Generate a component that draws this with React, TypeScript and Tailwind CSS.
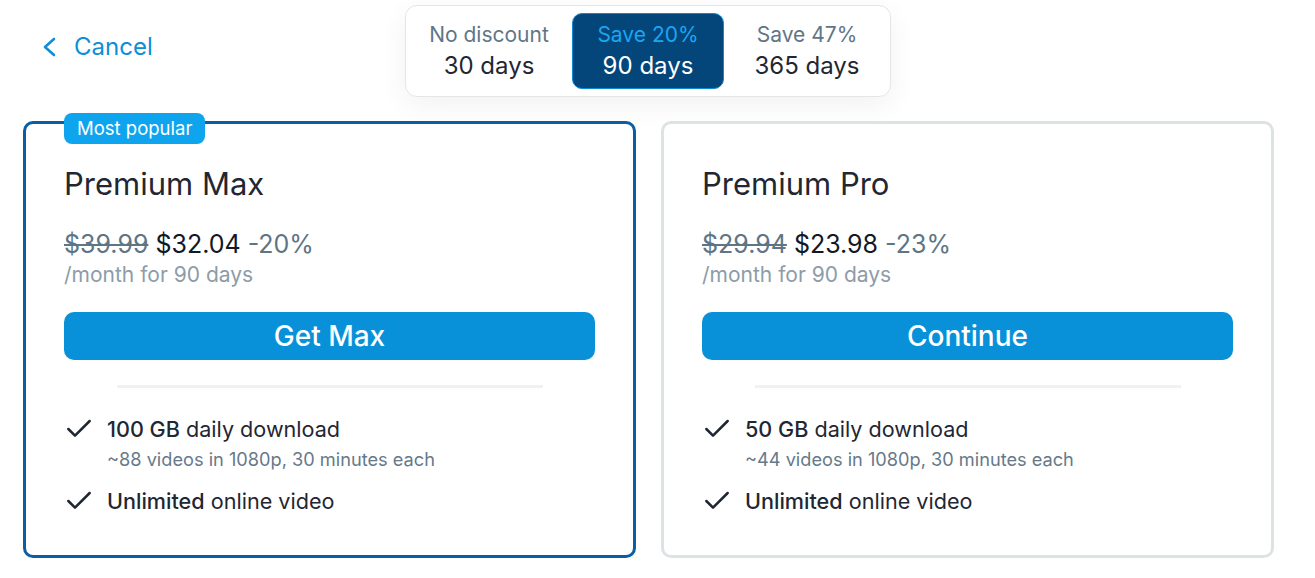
import { Check } from 'lucide-react'

type Plan = {
  name: string
  oldPrice: string
  price: string
  discount: string
  cta: string
  gb: string
  videos: string
  popular?: boolean
}

const plans: Plan[] = [
  {
    name: 'Premium Max',
    oldPrice: '$39.99',
    price: '$32.04',
    discount: '-20%',
    cta: 'Get Max',
    gb: '100 GB',
    videos: '~88 videos in 1080p, 30 minutes each',
    popular: true,
  },
  {
    name: 'Premium Pro',
    oldPrice: '$29.94',
    price: '$23.98',
    discount: '-23%',
    cta: 'Continue',
    gb: '50 GB',
    videos: '~44 videos in 1080p, 30 minutes each',
  },
]

const periods = [
  { label: 'No discount', days: '30 days' },
  { label: 'Save 20%', days: '90 days', active: true },
  { label: 'Save 47%', days: '365 days' },
]

function PlanCard({ plan }: { plan: Plan }) {
  return (
    <div
      className={
        plan.popular
          ? 'relative w-[613px] rounded-[10px] border-[3px] border-[#0b5ea3] bg-white px-[38px] pt-[42px] pb-[38px]'
          : 'relative w-[613px] rounded-[10px] border-[3px] border-[#dde3e5] bg-white px-[38px] pt-[42px] pb-[38px]'
      }
    >
      {plan.popular && (
        <div className="absolute top-[-11px] left-[38px] rounded-[8px] bg-[#0ea5ee] px-[13px] py-[3px] text-[18.5px] leading-[25px] text-white">
          Most popular
        </div>
      )}
      <div className="text-[31px] leading-[36px] text-[#1f2733]">{plan.name}</div>
      <div className="mt-[27px] text-[25px] leading-[30px] text-[#111827]">
        <span className="text-[#5e7585] line-through decoration-[1.5px]">{plan.oldPrice}</span>{' '}
        <span>{plan.price}</span> <span className="text-[#5e7585]">{plan.discount}</span>
      </div>
      <div className="mt-[3px] text-[21px] leading-[26px] text-[#8c9ca8]">/month for 90 days</div>
      <button className="mt-[24px] flex h-[48px] w-full items-center justify-center rounded-[10px] bg-[#0891d8] text-[28px] font-medium text-white">
        {plan.cta}
      </button>
      <div className="mx-auto mt-[25px] h-[3px] w-[426px] bg-[#f1f1f1]" />
      <ul className="mt-[27px] flex flex-col gap-[17px]">
        <li className="flex gap-[12px]">
          <Check className="-ml-[1px] -mt-[2px] h-[32px] w-[32px] shrink-0 text-[#1f2733]" strokeWidth={1.9} />
          <div>
            <div className="text-[21.6px] leading-[28px] text-[#1f2733]">
              <span className="font-medium">{plan.gb}</span> daily download
            </div>
            <div className="mt-[5px] text-[18.2px] leading-[22px] text-[#66798a]">{plan.videos}</div>
          </div>
        </li>
        <li className="flex gap-[12px]">
          <Check className="-ml-[1px] -mt-[2px] h-[32px] w-[32px] shrink-0 text-[#1f2733]" strokeWidth={1.9} />
          <div className="text-[21.6px] leading-[28px] text-[#1f2733]">
            <span className="font-medium">Unlimited</span> online video
          </div>
        </li>
      </ul>
    </div>
  )
}

export default function App() {
  return (
    <div className="h-[578px] w-[1315px] overflow-hidden bg-white font-['Inter',sans-serif]">
      <div className="relative flex h-[101px] items-start">
        <button className="mt-[32px] ml-[40px] flex items-center gap-[16px] text-[24px] leading-[30px] text-[#0a8fd8]">
          <svg width="18" height="24" viewBox="0 0 18 24" fill="none" stroke="currentColor" strokeWidth="2.6" strokeLinecap="round" strokeLinejoin="round">
            <polyline points="14,4 5,12 14,20" />
          </svg>
          Cancel
        </button>
        <div className="absolute top-[5px] left-[405px] flex h-[92px] w-[486px] items-center gap-[7px] rounded-[12px] border border-[#e3e6e8] bg-white px-[7px] shadow-[0_8px_30px_rgba(0,0,0,0.06)]">
          {periods.map((p) => (
            <div
              key={p.days}
              className={
                p.active
                  ? 'flex h-[76px] w-[154px] flex-col items-center justify-center rounded-[10px] border border-[#0b8ad0] bg-[#04457a]'
                  : 'flex h-[76px] w-[154px] flex-col items-center justify-center'
              }
            >
              <div className={p.active ? 'text-[21px] leading-[26px] text-[#1ba6f0]' : 'text-[21px] leading-[26px] text-[#5f7686]'}>
                {p.label}
              </div>
              <div className={p.active ? 'mt-[3px] text-[24px] leading-[30px] text-white' : 'mt-[3px] text-[24px] leading-[30px] text-[#1f2733]'}>
                {p.days}
              </div>
            </div>
          ))}
        </div>
      </div>
      <div className="mt-[20px] ml-[23px] flex gap-[25px]">
        {plans.map((p) => (
          <PlanCard key={p.name} plan={p} />
        ))}
      </div>
    </div>
  )
}
